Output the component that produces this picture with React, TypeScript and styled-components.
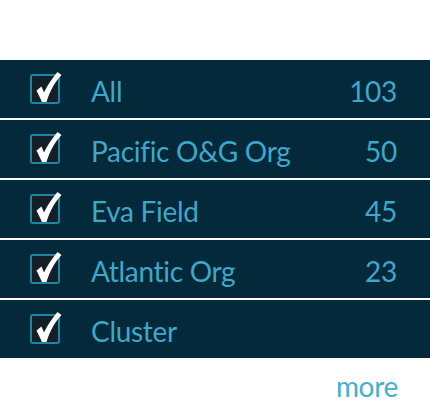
import React from "react";
import styled, { createGlobalStyle } from "styled-components";

const Global = createGlobalStyle`
  html, body { margin: 0; padding: 0; background: #ffffff; }
  body { font-family: Lato, "Open Sans", sans-serif; }
`;

const Panel = styled.div`
  padding-top: 60px;
  width: 430px;
`;

const List = styled.ul`
  list-style: none;
  margin: 0;
  padding: 0;
  display: flex;
  flex-direction: column;
  gap: 2px;
`;

const Row = styled.li`
  height: 58px;
  background: #03293b;
  display: flex;
  align-items: center;
  padding: 0 33px 0 30px;
  box-sizing: border-box;
`;

const Box = styled.span`
  position: relative;
  width: 30px;
  height: 30px;
  box-sizing: border-box;
  border: 2px solid #1e86a3;
  border-radius: 3px;
  background: #141f28;
  flex: none;
`;

const Check = styled.svg`
  position: absolute;
  left: 0;
  top: -10px;
  width: 30px;
  height: 38px;
`;

const Label = styled.span`
  margin-left: 31px;
  margin-top: 3px;
  flex: 1;
  color: #3ea8ca;
  font-size: 28px;
  letter-spacing: -0.3px;
  line-height: 1;
`;

const Count = styled.span`
  margin-top: 3px;
  color: #3ea8ca;
  font-size: 28px;
  letter-spacing: -0.3px;
  line-height: 1;
`;

const Footer = styled.div`
  display: flex;
  justify-content: flex-end;
  padding: 14px 32px 0 0;
`;

const More = styled.a`
  color: #45aed1;
  font-size: 28px;
  letter-spacing: -0.3px;
  line-height: 1;
  cursor: pointer;
`;

const items: { label: string; count?: number }[] = [
  { label: "All", count: 103 },
  { label: "Pacific O&G Org", count: 50 },
  { label: "Eva Field", count: 45 },
  { label: "Atlantic Org", count: 23 },
  { label: "Cluster" },
];

const CheckMark = () => (
  <Check viewBox="0 0 30 38">
    <path
      d="M4.5 24.5 L9.5 20.5 L12 26.5 C15.5 19 20 12.5 25.5 6 L29.5 9 C23.5 15.5 18 24 14.5 36 L10 36 Z"
      fill="#ffffff"
    />
  </Check>
);

export default function App() {
  return (
    <Panel>
      <Global />
      <List>
        {items.map((it) => (
          <Row key={it.label}>
            <Box>
              <CheckMark />
            </Box>
            <Label>{it.label}</Label>
            {it.count !== undefined && <Count>{it.count}</Count>}
          </Row>
        ))}
      </List>
      <Footer>
        <More>more</More>
      </Footer>
    </Panel>
  );
}
